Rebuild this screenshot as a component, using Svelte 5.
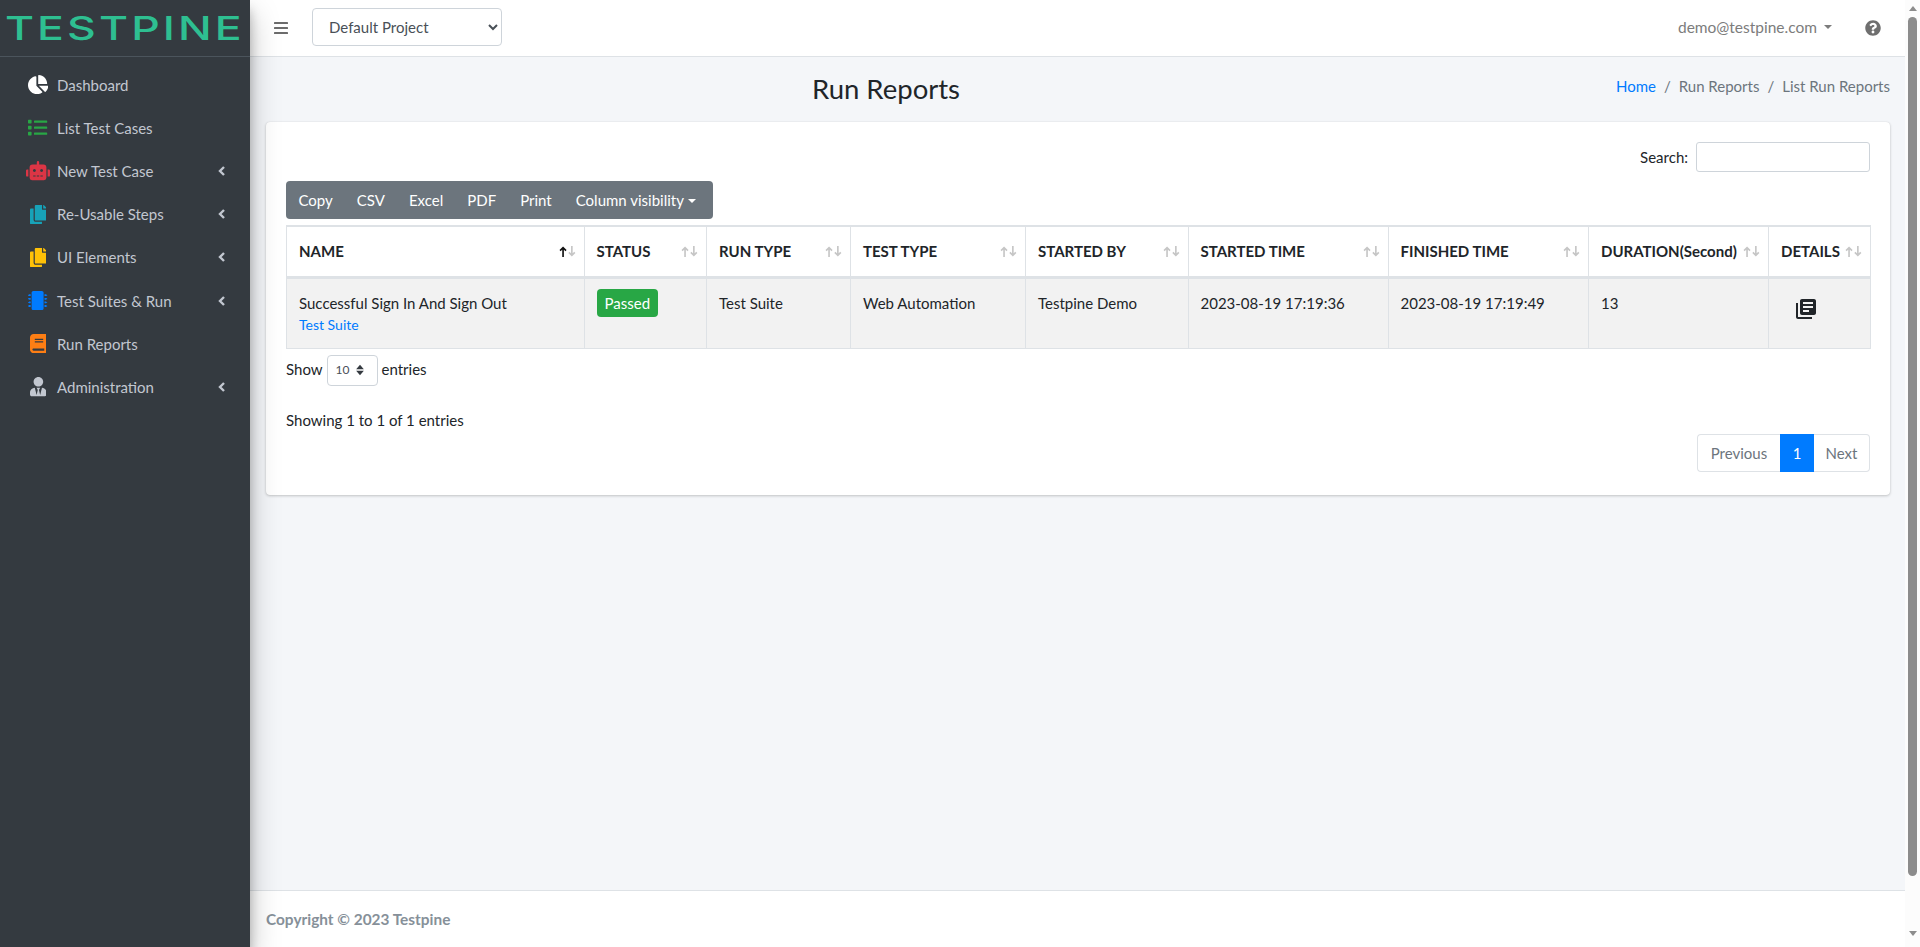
<script lang="ts">
  const icons = {
    pie: { vb: '0 0 544 512', d: 'M527.79 288H290.5l158.03 158.03c6.04 6.04 15.98 6.53 22.19.68 38.7-36.46 65.32-85.61 73.13-140.86 1.34-9.46-6.51-17.85-16.06-17.85zm-15.83-64.8C503.72 103.74 408.26 8.28 288.8.04 279.68-.59 272 7.1 272 16.24V240h223.77c9.14 0 16.82-7.68 16.19-16.8zM224 288V50.71c0-9.55-8.39-17.4-17.84-16.06C86.99 51.49-4.1 155.6.14 280.37 4.5 408.51 114.83 513.59 243.03 511.98c50.4-.63 96.97-16.87 135.26-44.03 7.9-5.6 8.42-17.23 1.57-24.08L224 288z' },
    list: { vb: '0 0 512 512', d: 'M80 368H16a16 16 0 0 0-16 16v64a16 16 0 0 0 16 16h64a16 16 0 0 0 16-16v-64a16 16 0 0 0-16-16zm0-320H16A16 16 0 0 0 0 64v64a16 16 0 0 0 16 16h64a16 16 0 0 0 16-16V64a16 16 0 0 0-16-16zm0 160H16a16 16 0 0 0-16 16v64a16 16 0 0 0 16 16h64a16 16 0 0 0 16-16v-64a16 16 0 0 0-16-16zm416 176H176a16 16 0 0 0-16 16v32a16 16 0 0 0 16 16h320a16 16 0 0 0 16-16v-32a16 16 0 0 0-16-16zm0-320H176a16 16 0 0 0-16 16v32a16 16 0 0 0 16 16h320a16 16 0 0 0 16-16V80a16 16 0 0 0-16-16zm0 160H176a16 16 0 0 0-16 16v32a16 16 0 0 0 16 16h320a16 16 0 0 0 16-16v-32a16 16 0 0 0-16-16z' },
    robot: { vb: '0 0 640 512', d: 'M32,224H64V416H32A31.96166,31.96166,0,0,1,0,384V256A31.96166,31.96166,0,0,1,32,224Zm512-48V448a64.06328,64.06328,0,0,1-64,64H160a64.06328,64.06328,0,0,1-64-64V176a79.974,79.974,0,0,1,80-80H288V32a32,32,0,0,1,64,0V96H464A79.974,79.974,0,0,1,544,176ZM264,256a40,40,0,1,0-40,40A39.997,39.997,0,0,0,264,256Zm-8,128H192v32h64Zm96,0H288v32h64ZM456,256a40,40,0,1,0-40,40A39.997,39.997,0,0,0,456,256Zm-8,128H384v32h64ZM640,256V384a31.96166,31.96166,0,0,1-32,32H576V224h32A31.96166,31.96166,0,0,1,640,256Z' },
    copy: { vb: '0 0 448 512', d: 'M320 448v40c0 13.255-10.745 24-24 24H24c-13.255 0-24-10.745-24-24V120c0-13.255 10.745-24 24-24h72v296c0 30.879 25.121 56 56 56h168zm0-344V0H152c-13.255 0-24 10.745-24 24v368c0 13.255 10.745 24 24 24h272c13.255 0 24-10.745 24-24V128H344c-13.2 0-24-10.8-24-24zm120.971-31.029L375.029 7.029A24 24 0 0 0 358.059 0H352v96h96v-6.059a24 24 0 0 0-7.029-16.97z' },
    chip: { vb: '0 0 512 512', d: 'M416 48v416c0 26.51-21.49 48-48 48H144c-26.51 0-48-21.49-48-48V48c0-26.51 21.49-48 48-48h224c26.51 0 48 21.49 48 48zm96 58v12a6 6 0 0 1-6 6h-18v6a6 6 0 0 1-6 6h-42V88h42a6 6 0 0 1 6 6v6h18a6 6 0 0 1 6 6zm0 96v12a6 6 0 0 1-6 6h-18v6a6 6 0 0 1-6 6h-42v-48h42a6 6 0 0 1 6 6v6h18a6 6 0 0 1 6 6zm0 96v12a6 6 0 0 1-6 6h-18v6a6 6 0 0 1-6 6h-42v-48h42a6 6 0 0 1 6 6v6h18a6 6 0 0 1 6 6zm0 96v12a6 6 0 0 1-6 6h-18v6a6 6 0 0 1-6 6h-42v-48h42a6 6 0 0 1 6 6v6h18a6 6 0 0 1 6 6zM30 376h42v48H30a6 6 0 0 1-6-6v-6H6a6 6 0 0 1-6-6v-12a6 6 0 0 1 6-6h18v-6a6 6 0 0 1 6-6zm0-96h42v48H30a6 6 0 0 1-6-6v-6H6a6 6 0 0 1-6-6v-12a6 6 0 0 1 6-6h18v-6a6 6 0 0 1 6-6zm0-96h42v48H30a6 6 0 0 1-6-6v-6H6a6 6 0 0 1-6-6v-12a6 6 0 0 1 6-6h18v-6a6 6 0 0 1 6-6zm0-96h42v48H30a6 6 0 0 1-6-6v-6H6a6 6 0 0 1-6-6V106a6 6 0 0 1 6-6h18v-6a6 6 0 0 1 6-6z' },
    book: { vb: '0 0 448 512', d: 'M448 360V24c0-13.3-10.7-24-24-24H96C43 0 0 43 0 96v320c0 53 43 96 96 96h328c13.3 0 24-10.7 24-24v-16c0-7.5-3.5-14.3-8.9-18.7-4.2-15.4-4.2-59.3 0-74.7 5.4-4.3 8.9-11.1 8.9-18.6zM128 134c0-3.3 2.7-6 6-6h212c3.3 0 6 2.7 6 6v20c0 3.3-2.7 6-6 6H134c-3.3 0-6-2.7-6-6v-20zm0 64c0-3.3 2.7-6 6-6h212c3.3 0 6 2.7 6 6v20c0 3.3-2.7 6-6 6H134c-3.3 0-6-2.7-6-6v-20zm253.4 250H96c-17.7 0-32-14.3-32-32 0-17.6 14.4-32 32-32h285.4c-1.9 17.1-1.9 46.9 0 64z' },
    user: { vb: '0 0 448 512', d: 'M224 256c70.7 0 128-57.3 128-128S294.7 0 224 0 96 57.3 96 128s57.3 128 128 128zm95.8 32.6L272 480l-32-136 32-56h-96l32 56-32 136-47.8-191.4C56.9 292 0 350.3 0 422.4V464c0 26.5 21.5 48 48 48h352c26.5 0 48-21.5 48-48v-41.6c0-72.1-56.9-130.4-128.2-133.8z' }
  };

  const menu = [
    { label: 'Dashboard', icon: icons.pie, color: '#ffffff', more: false },
    { label: 'List Test Cases', icon: icons.list, color: '#28a745', more: false },
    { label: 'New Test Case', icon: icons.robot, color: '#dc3545', more: true },
    { label: 'Re-Usable Steps', icon: icons.copy, color: '#17a2b8', more: true },
    { label: 'UI Elements', icon: icons.copy, color: '#ffc107', more: true },
    { label: 'Test Suites & Run', icon: icons.chip, color: '#007bff', more: true },
    { label: 'Run Reports', icon: icons.book, color: '#fd7e14', more: false },
    { label: 'Administration', icon: icons.user, color: '#c2c7d0', more: true }
  ];

  const buttons = ['Copy', 'CSV', 'Excel', 'PDF', 'Print'];

  const columns = [
    { label: 'NAME', width: 297.5 },
    { label: 'STATUS', width: 122.5 },
    { label: 'RUN TYPE', width: 144 },
    { label: 'TEST TYPE', width: 175 },
    { label: 'STARTED BY', width: 162.5 },
    { label: 'STARTED TIME', width: 200 },
    { label: 'FINISHED TIME', width: 200.5 },
    { label: 'DURATION(Second)', width: 180 },
    { label: 'DETAILS', width: 102 }
  ];
</script>

<div class="page">
  <aside class="sidebar">
    <div class="brand"><span>TESTPINE</span></div>
    <nav class="menu">
      {#each menu as item}
        <a class="menu-item" href="#top">
          <span class="menu-icon">
            <svg viewBox={item.icon.vb} height="19.2" fill={item.color}><path d={item.icon.d} /></svg>
          </span>
          <span class="menu-label">{item.label}</span>
          {#if item.more}
            <svg class="chevron" viewBox="0 0 8 12" width="8" height="12"><path d="M6 2 2 6l4 4" fill="none" stroke="#c2c7d0" stroke-width="2.4" /></svg>
          {/if}
        </a>
      {/each}
    </nav>
  </aside>

  <div class="main">
    <header class="navbar">
      <button class="bars" aria-label="Toggle menu">
        <svg viewBox="0 0 14 12" width="14" height="12" fill="#6c6c6c">
          <rect y="0" width="14" height="2" rx="0.6" />
          <rect y="5" width="14" height="2" rx="0.6" />
          <rect y="10" width="14" height="2" rx="0.6" />
        </svg>
      </button>
      <select class="project">
        <option>Default Project</option>
      </select>
      <div class="spacer"></div>
      <span class="user">demo@testpine.com</span>
      <span class="caret dark"></span>
      <svg class="help" viewBox="0 0 512 512" width="16" height="16" fill="#6f6f6f"><path d="M504 256c0 136.997-111.043 248-248 248S8 392.997 8 256C8 119.083 119.043 8 256 8s248 111.083 248 248zM262.655 90c-54.497 0-89.255 22.957-116.549 63.758-3.536 5.286-2.353 12.415 2.715 16.258l34.699 26.31c5.205 3.947 12.621 3.008 16.665-2.122 17.864-22.658 30.113-35.797 57.303-35.797 20.429 0 45.698 13.148 45.698 32.958 0 14.976-12.363 22.667-32.534 33.976C247.128 238.528 216 254.941 216 296v4c0 6.627 5.373 12 12 12h56c6.627 0 12-5.373 12-12v-1.333c0-28.462 83.186-29.647 83.186-106.667 0-58.002-60.165-102-116.531-102zM256 338c-25.365 0-46 20.635-46 46 0 25.364 20.635 46 46 46s46-20.636 46-46c0-25.365-20.635-46-46-46z" /></svg>
    </header>

    <main class="content">
      <div class="content-header">
        <h1>Run Reports</h1>
        <ol class="breadcrumb">
          <li><a href="#top">Home</a></li>
          <li class="sep">/</li>
          <li>Run Reports</li>
          <li class="sep">/</li>
          <li>List Run Reports</li>
        </ol>
      </div>

      <section class="card">
        <div class="search-row">
          <label for="search">Search:</label>
          <input id="search" type="search" />
        </div>

        <div class="btn-group">
          {#each buttons as b}
            <span class="btn">{b}</span>
          {/each}
          <span class="btn">Column visibility<span class="caret light"></span></span>
        </div>

        <table>
          <colgroup>
            {#each columns as col}
              <col style="width: {col.width}px" />
            {/each}
          </colgroup>
          <thead>
            <tr>
              {#each columns as col, i}
                <th>
                  {col.label}
                  <svg class="sort" viewBox="0 0 16 10" width="18" height="11" fill="none" stroke-width="1.5">
                    <path class={i === 0 ? 'on' : ''} d="M3.5 10V1.5M.8 4.2l2.7-2.7 2.7 2.7" />
                    <path d="M11.5 0v8.5M8.8 5.8l2.7 2.7 2.7-2.7" />
                  </svg>
                </th>
              {/each}
            </tr>
          </thead>
          <tbody>
            <tr>
              <td>
                Successful Sign In And Sign Out
                <a class="small" href="#top">Test Suite</a>
              </td>
              <td><span class="badge">Passed</span></td>
              <td>Test Suite</td>
              <td>Web Automation</td>
              <td>Testpine Demo</td>
              <td>2023-08-19 17:19:36</td>
              <td>2023-08-19 17:19:49</td>
              <td>13</td>
              <td class="details">
                <svg viewBox="0 0 24 24" width="24" height="24" fill="#212529"><path d="M4 6H2v14c0 1.1.9 2 2 2h14v-2H4V6zm16-4H8c-1.1 0-2 .9-2 2v12c0 1.1.9 2 2 2h12c1.1 0 2-.9 2-2V4c0-1.1-.9-2-2-2zm-1 9H9V9h10v2zm-4 4H9v-2h6v2zm4-8H9V5h10v2z" /></svg>
              </td>
            </tr>
          </tbody>
        </table>

        <div class="length">
          Show
          <span class="length-select">
            10
            <svg viewBox="0 0 10 14" width="10" height="12" fill="#343a40"><path d="M5 1 9.5 6h-9zM5 13 .5 8h9z" /></svg>
          </span>
          entries
        </div>

        <div class="info">Showing 1 to 1 of 1 entries</div>

        <div class="pagination">
          <span class="page-link first">Previous</span>
          <span class="page-link active">1</span>
          <span class="page-link last">Next</span>
        </div>
      </section>
    </main>

    <footer class="footer">Copyright © 2023 Testpine</footer>
  </div>

  <div class="scrollbar">
    <span class="arrow up"></span>
    <span class="thumb"></span>
    <span class="arrow down"></span>
  </div>
</div>

<style>
  :global(body) {
    margin: 0;
    overflow: hidden;
    background: #f4f6f9;
    font-family: Lato, 'Noto Sans', sans-serif;
    font-size: 15px;
    color: #212529;
  }

  .page {
    display: flex;
    height: 947px;
  }

  .sidebar {
    width: 250px;
    flex: none;
    background: #343a40;
    box-shadow: 0 14px 28px rgba(0, 0, 0, 0.25), 0 10px 10px rgba(0, 0, 0, 0.22);
    z-index: 2;
  }

  .brand {
    height: 56px;
    border-bottom: 1px solid #4b545c;
    display: flex;
    align-items: center;
    justify-content: center;
    overflow: hidden;
  }

  .brand span {
    font-family: Inter, sans-serif;
    font-size: 33px;
    font-weight: 500;
    line-height: 1;
    letter-spacing: 2.3px;
    transform: scaleX(1.35);
    white-space: nowrap;
    color: #2ebf91;
  }

  .menu {
    padding-top: 6px;
    display: flex;
    flex-direction: column;
  }

  .menu-item {
    height: 43.2px;
    display: flex;
    align-items: center;
    padding-left: 26px;
    color: #c2c7d0;
    text-decoration: none;
  }

  .menu-icon {
    width: 24px;
    height: 19.2px;
    margin-right: 7px;
    display: flex;
    justify-content: center;
  }

  .menu-label {
    flex: 1;
  }

  .chevron {
    margin-right: 24px;
  }

  .main {
    flex: 1;
    min-width: 0;
    display: flex;
    flex-direction: column;
  }

  .navbar {
    height: 56px;
    flex: none;
    background: #fff;
    border-bottom: 1px solid #dee2e6;
    display: flex;
    align-items: center;
  }

  .bars {
    background: none;
    border: none;
    padding: 0;
    margin-left: 24px;
    width: 14px;
    height: 12px;
    display: flex;
  }

  .project {
    margin: 0 0 2px 24px;
    width: 190px;
    height: 38px;
    padding: 0 12px;
    font: inherit;
    color: #495057;
    background: #fff;
    border: 1px solid #ced4da;
    border-radius: 4px;
  }

  .spacer {
    flex: 1;
  }

  .user {
    font-size: 15.5px;
    color: #7c7c7c;
    margin-bottom: 2px;
  }

  .caret {
    display: inline-block;
    border-top: 4px solid;
    border-left: 4px solid transparent;
    border-right: 4px solid transparent;
  }

  .caret.dark {
    color: #7c7c7c;
    margin: 0 0 2px 7px;
  }

  .caret.light {
    color: #fff;
    margin-left: 4px;
    vertical-align: 3px;
  }

  .help {
    margin: 0 24px 0 33px;
  }

  .content {
    flex: 1;
    padding: 0 15px 0 16px;
  }

  .content-header {
    height: 65px;
    display: flex;
    align-items: center;
  }

  h1 {
    margin: 0 0 2px;
    width: 1240px;
    text-align: center;
    font-size: 27.5px;
    font-weight: 400;
    line-height: 1.2;
  }

  .breadcrumb {
    margin: 0 0 7px auto;
    padding: 0;
    list-style: none;
    display: flex;
    gap: 8px;
    color: #6c757d;
    white-space: nowrap;
  }

  .breadcrumb a,
  .small {
    color: #007bff;
    text-decoration: none;
  }

  .card {
    background: #fff;
    border-radius: 4px;
    box-shadow: 0 0 1px rgba(0, 0, 0, 0.125), 0 1px 3px rgba(0, 0, 0, 0.2);
    padding: 20px 20px 23px;
    height: 330px;
  }

  .search-row {
    display: flex;
    justify-content: flex-end;
    align-items: center;
    gap: 8px;
    height: 30px;
  }

  .search-row input {
    width: 174px;
    height: 30px;
    box-sizing: border-box;
    border: 1px solid #ced4da;
    border-radius: 3px;
    background: #fff;
  }

  .btn-group {
    margin-top: 9px;
    height: 38px;
    width: 426.5px;
    padding-left: 0.5px;
    display: flex;
    background: #6c757d;
    border-radius: 4px;
    color: #fff;
  }

  .btn {
    padding: 0 12px;
    line-height: 38px;
    white-space: nowrap;
  }

  table {
    margin-top: 6px;
    width: 1584px;
    table-layout: fixed;
    border-collapse: collapse;
    border: 1px solid #dee2e6;
  }

  th,
  td {
    border: 1px solid #dee2e6;
    padding: 12px;
    text-align: left;
    vertical-align: top;
  }

  th {
    position: relative;
    height: 51px;
    box-sizing: border-box;
    border-top-width: 2px;
    border-bottom-width: 3px;
    font-weight: 700;
    vertical-align: middle;
    white-space: nowrap;
  }

  .sort {
    position: absolute;
    right: 7px;
    top: 19px;
    stroke: #c6c6c6;
  }

  .sort path.on {
    stroke: #111;
  }

  tbody td {
    background: #f2f2f2;
    height: 71px;
    box-sizing: border-box;
    padding-top: 12px;
    padding-bottom: 0;
    line-height: 24px;
  }

  .small {
    display: block;
    font-size: 14px;
    line-height: 20px;
  }

  .badge {
    display: block;
    width: fit-content;
    margin-top: -2px;
    background: #28a745;
    color: #fff;
    padding: 2px 8px;
    border-radius: 4px;
    line-height: 24px;
  }

  td.details {
    padding-left: 25px;
  }

  .details svg {
    display: block;
    margin-top: 6px;
  }

  .length {
    margin-top: 6px;
    height: 32px;
    line-height: 28px;
    display: flex;
    align-items: flex-start;
  }

  .length-select {
    margin: 0 4px;
    width: 51px;
    height: 31px;
    box-sizing: border-box;
    border: 1px solid #ced4da;
    border-radius: 4px;
    font-size: 12px;
    color: #495057;
    display: flex;
    align-items: center;
    justify-content: space-between;
    padding: 0 12px 0 8px;
  }

  .info {
    margin-top: 21px;
    line-height: 24px;
  }

  .pagination {
    display: flex;
    justify-content: flex-end;
    height: 38px;
    margin-top: 2px;
  }

  .page-link {
    box-sizing: border-box;
    padding: 0 12px;
    line-height: 36px;
    color: #6c757d;
    border: 1px solid #dee2e6;
  }

  .page-link.first {
    width: 83px;
    text-align: center;
    padding: 0;
    border-radius: 4px 0 0 4px;
    border-right: none;
  }

  .page-link.last {
    width: 56px;
    text-align: center;
    padding: 0;
    border-radius: 0 4px 4px 0;
    border-left: none;
  }

  .page-link.active {
    width: 34px;
    text-align: center;
    padding: 0;
    background: #007bff;
    border-color: #007bff;
    color: #fff;
  }

  .footer {
    flex: none;
    height: 56px;
    background: #fff;
    border-top: 1px solid #dee2e6;
    padding-left: 16px;
    line-height: 56px;
    font-size: 15.4px;
    font-weight: 700;
    color: #869099;
  }

  .scrollbar {
    width: 15px;
    flex: none;
    background: #fcfcfc;
    display: flex;
    flex-direction: column;
    align-items: center;
  }

  .thumb {
    width: 9px;
    height: 859px;
    margin: 6px 0;
    background: #8c8c8c;
    border-radius: 5px;
  }

  .arrow {
    margin-top: 6px;
    width: 0;
    height: 0;
    border-left: 4px solid transparent;
    border-right: 4px solid transparent;
  }

  .arrow.up {
    border-bottom: 5px solid #8c8c8c;
  }

  .arrow.down {
    margin-top: 49px;
    border-top: 5px solid #8c8c8c;
  }
</style>
